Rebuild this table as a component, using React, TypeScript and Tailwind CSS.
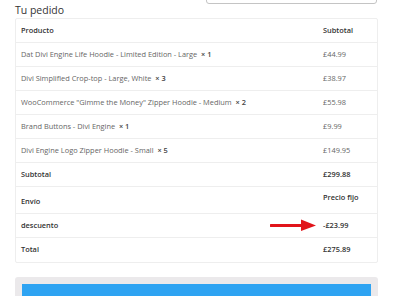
import React from 'react';

type Row = { label: React.ReactNode; value: string };

const Qty = ({ n }: { n: number }) => <b className="font-semibold text-[#444]">&nbsp;× {n}</b>;

const rows: Row[] = [
  { label: <>Dat Divi Engine Life Hoodie - Limited Edition - Large <Qty n={1} /></>, value: '£44.99' },
  { label: <>Divi Simplified Crop-top - Large, White <Qty n={3} /></>, value: '£38.97' },
  { label: <>WooCommerce "Gimme the Money" Zipper Hoodie - Medium <Qty n={2} /></>, value: '£55.98' },
  { label: <>Brand Buttons - Divi Engine <Qty n={1} /></>, value: '£9.99' },
  { label: <>Divi Engine Logo Zipper Hoodie - Small <Qty n={5} /></>, value: '£149.95' },
];

const App: React.FC = () => {
  return (
    <div className="w-[400px] h-[296px] overflow-hidden bg-white font-['Open_Sans',sans-serif] text-[#666666]">
      {/* bottom edge of a field cut off at the top */}
      <div className="flex justify-end pr-[23px] h-[4px] overflow-hidden">
        <div className="w-[171px] h-[24px] -mt-[20px] border border-[#c4c4c4] rounded-[3px] bg-white" />
      </div>

      <h3 className="ml-[15px] -mt-[1px] text-[10.5px] leading-[15px] text-[#333]">Tu pedido</h3>

      <div className="mx-[15px] w-[363px] border border-[#eeeeee] rounded-[2px] text-[7.4px]">
        <div className="flex items-center h-[24px] border-b border-[#eeeeee] font-semibold text-[#333]">
          <div className="flex-1 pl-[5px]">Producto</div>
          <div className="w-[54px]">Subtotal</div>
        </div>

        {rows.map((r, i) => (
          <div key={i} className="flex items-center h-[24px] border-b border-[#eeeeee]">
            <div className="flex-1 pl-[5px]">{r.label}</div>
            <div className="w-[54px]">{r.value}</div>
          </div>
        ))}

        <div className="flex items-center h-[24px] border-b border-[#eeeeee] font-semibold text-[#333]">
          <div className="flex-1 pl-[5px]">Subtotal</div>
          <div className="w-[54px]">£299.88</div>
        </div>

        <div className="flex items-start h-[27px] border-b border-[#eeeeee] font-semibold text-[#333]">
          <div className="flex-1 pl-[5px] pt-[9px]">Envío</div>
          <div className="w-[54px] pt-[5px]">Precio fijo</div>
        </div>

        <div className="relative flex items-center h-[24px] border-b border-[#eeeeee] font-semibold text-[#333]">
          <div className="flex-1 pl-[5px]">descuento</div>
          <div className="w-[54px]">-£23.99</div>
          <svg className="absolute left-[254px] top-[5px]" width="47" height="12" viewBox="0 0 47 12">
            <path d="M1 6.5 H33" stroke="#e1141a" strokeWidth="3" strokeLinecap="round" />
            <path d="M31 0.5 L46 6.5 L31 12 Z" fill="#e1141a" />
          </svg>
        </div>

        <div className="flex items-center h-[24px] font-semibold text-[#333]">
          <div className="flex-1 pl-[5px]">Total</div>
          <div className="w-[54px]">£275.89</div>
        </div>
      </div>

      <div className="mx-[15px] mt-[14px] w-[363px] h-[40px] bg-[#ebe9eb] rounded-[3px] px-[7px] pt-[7px]">
        <div className="h-[40px] bg-[#2ea3f2]" />
      </div>
    </div>
  );
};

export default App;
